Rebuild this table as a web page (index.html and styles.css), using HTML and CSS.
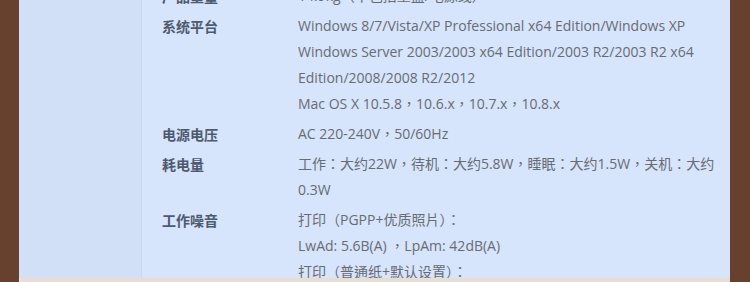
FILE: index.html
```html
<!DOCTYPE html>
<html lang="zh-CN">
<head>
<meta charset="utf-8">
<title>规格参数</title>
<link rel="stylesheet" href="styles.css">
</head>
<body>
<div class="page">
  <div class="main">
    <div class="side"></div>
    <div class="specs">
      <div class="row"><div class="label">产品重量</div><div class="value">14.9kg（不包括墨盒/电源线）</div></div>
      <div class="row"><div class="label">系统平台</div><div class="value">Windows 8/7/Vista/XP Professional x64 Edition/Windows XP<br>Windows Server 2003/2003 x64 Edition/2003 R2/2003 R2 x64 Edition/2008/2008 R2/2012<br>Mac OS X 10.5.8，10.6.x，10.7.x，10.8.x</div></div>
      <div class="row"><div class="label">电源电压</div><div class="value">AC 220-240V，50/60Hz</div></div>
      <div class="row"><div class="label">耗电量</div><div class="value">工作：大约22W，待机：大约5.8W，睡眠：大约1.5W，关机：大约0.3W</div></div>
      <div class="row"><div class="label">工作噪音</div><div class="value">打印（PGPP+优质照片）：<br>LwAd: 5.6B(A) ，LpAm: 42dB(A)<br>打印（普通纸+默认设置）：</div></div>
    </div>
  </div>
  <div class="foot"></div>
</div>
</body>
</html>
```

FILE: styles.css
```css
html, body {
  margin: 0;
  padding: 0;
  background: #68402e;
  height: 282px;
  overflow: hidden;
}
.page {
  margin: 0 20px 0 19px;
  height: 282px;
  display: flex;
  flex-direction: column;
}
.main {
  display: flex;
  height: 278px;
  overflow: hidden;
  background: #d6e4fc;
}
.side {
  width: 122px;
  flex: none;
  background: #d1dff7;
  border-right: 1px solid #c9d8f0;
}
.specs {
  flex: 1;
  padding-left: 20px;
  margin-top: -17px;
  font-family: "Open Sans", "Noto Sans CJK TC", sans-serif;
  font-size: 14px;
}
.row {
  display: flex;
  line-height: 26px;
  margin-bottom: 4px;
}
.label {
  width: 136px;
  flex: none;
  font-family: "Noto Sans CJK SC", sans-serif;
  font-weight: bold;
  color: #4e5a6e;
}
.value {
  width: 420px;
  color: #686c72;
  font-feature-settings: "locl" 0;
}
.foot {
  height: 4px;
  background: #e9ddd0;
  border-left: 1px solid #f4efe9;
}
```
